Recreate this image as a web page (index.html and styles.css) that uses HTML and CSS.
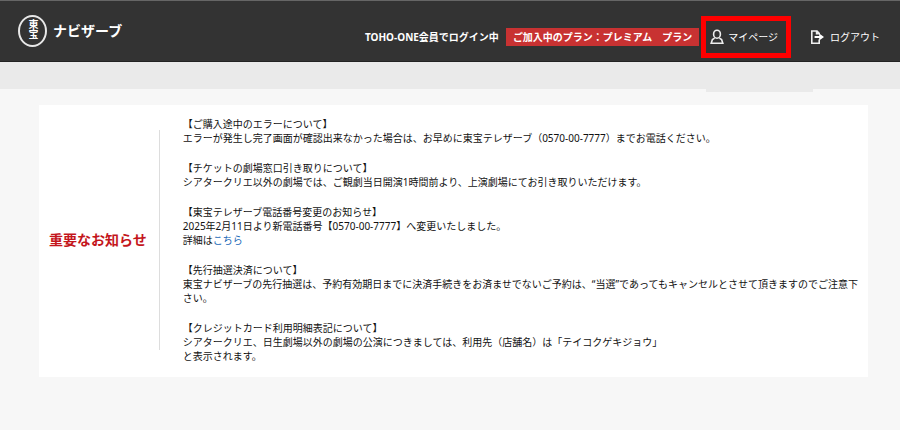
FILE: index.html
```
<!DOCTYPE html>
<html lang="ja">
<head>
    <meta charset="UTF-8">
    <meta name="viewport" content="width=device-width, initial-scale=1.0">
    <title>東宝ナビザーブ</title>
    <link rel="stylesheet" href="styles.css">
</head>
<body>

    <header class="header">
        <a href="#" class="logo">
            <span class="logo-mark">東宝</span>
            <span class="logo-name">ナビザーブ</span>
        </a>

        <div class="user-menu">
            <span class="login-status">TOHO-ONE会員でログイン中</span>
            <span class="plan">ご加入中のプラン：プレミアム　プラン</span>
            <a href="#" class="menu-link mypage">
                <svg class="icon" viewBox="0 0 14 16" aria-hidden="true">
                    <ellipse cx="7" cy="5.2" rx="3.4" ry="4"/>
                    <path d="M4.6 9.2 2.4 10.6 1.2 14.2h11.6l-1.2-3.6-2.2-1.4"/>
                </svg>
                マイページ
            </a>
            <a href="#" class="menu-link logout">
                <svg class="icon" viewBox="0 0 14 16" aria-hidden="true">
                    <path d="M9.2 5.4V4.4L7 2H1.8v12.2h7.4v-3.6M6.6 2v2.6h2.6"/>
                    <path class="arrow" d="M4.6 6.9h4.6V4.4L14 8l-4.8 3.6V9.1H4.6z"/>
                </svg>
                ログアウト
            </a>
        </div>
    </header>

    <nav class="nav-bar">
        <div class="nav-tab"></div>
    </nav>

    <main class="notice">
        <h1 class="notice-title">重要なお知らせ</h1>
        <div class="notice-body">
            <p>【ご購入途中のエラーについて】<br>
            エラーが発生し完了画面が確認出来なかった場合は、お早めに東宝テレザーブ（0570-00-7777）までお電話ください。</p>

            <p>【チケットの劇場窓口引き取りについて】<br>
            シアタークリエ以外の劇場では、ご観劇当日開演1時間前より、上演劇場にてお引き取りいただけます。</p>

            <p>【東宝テレザーブ電話番号変更のお知らせ】<br>
            2025年2月11日より新電話番号【0570-00-7777】へ変更いたしました。<br>
            詳細は<a href="#">こちら</a></p>

            <p>【先行抽選決済について】<br>
            東宝ナビザーブの先行抽選は、予約有効期日までに決済手続きをお済ませでないご予約は、“当選”であってもキャンセルとさせて頂きますのでご注意下さい。</p>

            <p>【クレジットカード利用明細表記について】<br>
            シアタークリエ、日生劇場以外の劇場の公演につきましては、利用先（店舗名）は「テイコクゲキジョウ」<br>
            と表示されます。</p>
        </div>
    </main>

</body>
</html>
```

FILE: styles.css
```
* {
    box-sizing: border-box;
}

body {
    margin: 0;
    background-color: #f7f7f7;
    color: #111;
    font-family: "Noto Sans", "Noto Sans CJK JP", sans-serif;
    font-size: 10px;
    line-height: 14px;
}

a {
    text-decoration: none;
}

.header {
    display: flex;
    justify-content: space-between;
    align-items: flex-start;
    height: 62px;
    padding: 14px 20px 0 18px;
    background-color: #333;
    border-top: 1px solid #666;
    border-bottom: 1px solid #222;
    color: #fff;
}

.logo {
    display: flex;
    align-items: center;
    gap: 6px;
    color: #fff;
    font-weight: bold;
}

.logo-mark {
    width: 29px;
    height: 32px;
    padding-top: 2px;
    border: 2px solid #e8e8e8;
    border-radius: 50%;
    font-size: 10px;
    line-height: 25px;
    writing-mode: vertical-rl;
}

.logo-name {
    font-size: 14px;
}

.user-menu {
    display: flex;
    align-items: center;
    padding-top: 1px;
}

.login-status {
    font-weight: bold;
}

.plan {
    margin: 0 2px 0 7px;
    padding: 2px 7px;
    background-color: #c83232;
    font-weight: bold;
}

.menu-link {
    display: flex;
    align-items: center;
    gap: 4px;
    color: #fff;
}

.mypage {
    height: 42px;
    padding: 0 8px 0 4px;
    border: 5px solid #f00;
}

.logout {
    gap: 6px;
    margin-left: 19px;
}

.icon {
    width: 14px;
    height: 16px;
    fill: none;
    stroke: #eee;
    stroke-width: 1.6;
}

.icon .arrow {
    fill: #fff;
    stroke: none;
}

.nav-bar {
    position: relative;
    height: 27px;
    background-color: #eaeaea;
}

.nav-tab {
    position: absolute;
    top: 100%;
    right: 87px;
    width: 107px;
    height: 3px;
    background-color: #eaeaea;
}

.notice {
    display: flex;
    align-items: center;
    margin: 16px 32px 20px 39px;
    padding: 12px 4px 14px 10px;
    background-color: #fff;
}

.notice-title {
    display: flex;
    align-items: center;
    flex: none;
    height: 220px;
    margin: 0;
    padding-right: 12px;
    border-right: 1px solid #ddd;
    color: #c4161c;
    font-size: 14px;
}

.notice-body {
    flex: 1;
    padding-left: 23px;
}

.notice-body p {
    margin: 0 0 16px;
}

.notice-body p:last-child {
    margin-bottom: 0;
}

.notice-body a {
    color: #1a6ab8;
}
```
